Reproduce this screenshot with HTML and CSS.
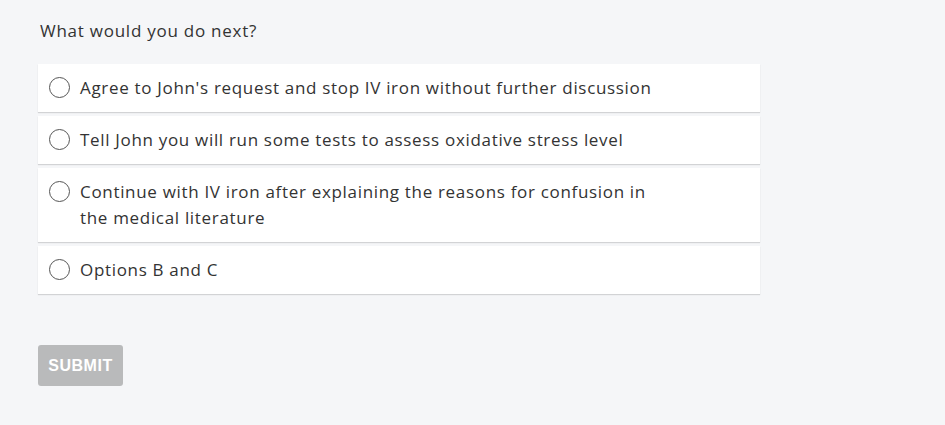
FILE: index.html
```html
<!DOCTYPE html>
<html>
<head>
<meta charset="utf-8">
<link rel="stylesheet" href="styles.css">
</head>
<body>
<div class="quiz">
  <p class="question">What would you do next?</p>
  <ul class="options">
    <li class="option"><span class="radio"></span><span class="label">Agree to John's request and stop IV iron without further discussion</span></li>
    <li class="option"><span class="radio"></span><span class="label">Tell John you will run some tests to assess oxidative stress level</span></li>
    <li class="option"><span class="radio"></span><span class="label">Continue with IV iron after explaining the reasons for confusion in<br>the medical literature</span></li>
    <li class="option"><span class="radio"></span><span class="label">Options B and C</span></li>
  </ul>
  <button class="submit">SUBMIT</button>
</div>
</body>
</html>
```
FILE: styles.css
```css
html, body {
  margin: 0;
  padding: 0;
  background: #f5f6f8;
}
body {
  font-family: "Open Sans", "Liberation Sans", sans-serif;
  color: #333;
}
.quiz {
  padding: 18px 0 0 38px;
  width: 722px;
}
.question {
  margin: 0 0 20px 2px;
  font-size: 17px;
  line-height: 26px;
  letter-spacing: 0.75px;
}
.options {
  list-style: none;
  margin: 0;
  padding: 0;
  display: flex;
  flex-direction: column;
  gap: 4px;
}
.option {
  display: flex;
  align-items: flex-start;
  background: #fff;
  padding: 11px 12px 11px 11px;
  box-shadow: 0 1px 1px rgba(0,0,0,0.14);
  font-size: 17px;
  line-height: 26px;
  letter-spacing: 0.68px;
}
.radio {
  flex: none;
  width: 19px;
  height: 19px;
  border: 1.5px solid #555;
  border-radius: 50%;
  margin-top: 2px;
  margin-right: 10px;
}
.submit {
  margin-top: 51px;
  width: 85px;
  height: 41px;
  border: none;
  border-radius: 3px;
  background: #b9babb;
  color: #fff;
  font-family: "Liberation Sans", Arial, sans-serif;
  font-weight: bold;
  font-size: 16px;
  letter-spacing: 0.5px;
  padding: 0;
}
```
